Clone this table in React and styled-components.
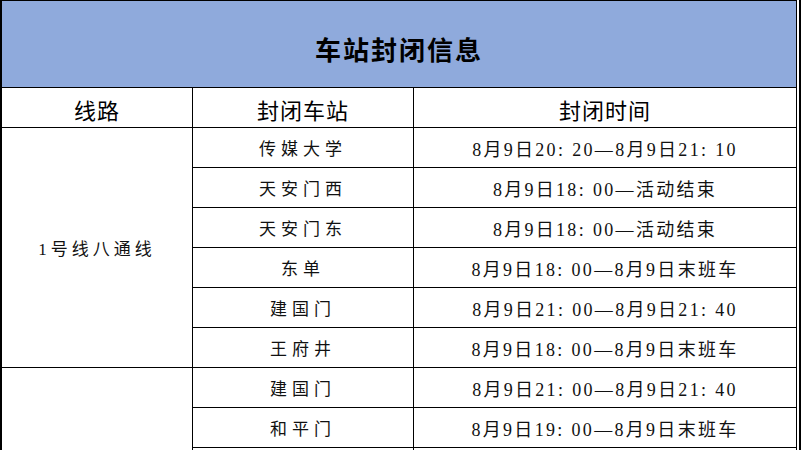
import React from "react";
import styled, { createGlobalStyle } from "styled-components";

const GlobalStyle = createGlobalStyle`
	html, body {
		margin: 0;
		padding: 0;
		background: #fff;
		overflow: hidden;
	}
`;

const Frame = styled.div`
	display: flex;
	width: 801px;
	height: 450px;
	overflow: hidden;
	background: #fff;
`;

const Sheet = styled.div`
	display: grid;
	grid-template-columns: 190px 220px 382px;
	grid-template-rows: 86px;
	grid-auto-rows: 39px;
	gap: 1px;
	padding: 1px 1px 1px 2px;
	background: #000;
	align-self: flex-start;
`;

const RightEdge = styled.div`
	width: 2px;
	margin-left: 2px;
	background: #000;
`;

const TitleCell = styled.div`
	grid-column: 1 / -1;
	background: #8faadc;
	display: flex;
	align-items: center;
	justify-content: center;
	padding-top: 8px;
	box-sizing: border-box;
	font-family: "Noto Sans CJK SC", sans-serif;
	font-weight: 700;
	font-size: 26px;
	letter-spacing: 2px;
	color: #000;
`;

const HeadCell = styled.div`
	background: #fff;
	display: flex;
	align-items: center;
	justify-content: center;
	padding-top: 2px;
	box-sizing: border-box;
	font-family: "Noto Sans CJK SC", sans-serif;
	font-size: 22px;
	letter-spacing: 1px;
	color: #000;
`;

const Cell = styled.div`
	background: #fff;
	display: flex;
	align-items: center;
	justify-content: center;
	font-family: "Liberation Serif", "Noto Sans CJK SC", serif;
	font-size: ${({ $size }) => $size || 17}px;
	color: #111;
	letter-spacing: ${({ $spacing }) => $spacing}px;
	grid-row: ${({ $span }) => ($span ? `span ${$span}` : "auto")};
	grid-column: ${({ $col }) => $col};
`;

const Label = styled.span`
	white-space: nowrap;
`;

const Colon = styled.span`
	padding-right: 7px;
`;

// colons in the times sit tight to the hour with a gap after them
const TimeText = ({ text }) => (
	<Label>
		{text.split(":").map((part, i, arr) => (
			<React.Fragment key={i}>
				{part}
				{i < arr.length - 1 && <Colon>:</Colon>}
			</React.Fragment>
		))}
	</Label>
);

const groups = [
	{
		line: "1号线八通线",
		rows: [
			["传媒大学", "8月9日20:20—8月9日21:10"],
			["天安门西", "8月9日18:00—活动结束"],
			["天安门东", "8月9日18:00—活动结束"],
			["东单", "8月9日18:00—8月9日末班车"],
			["建国门", "8月9日21:00—8月9日21:40"],
			["王府井", "8月9日18:00—8月9日末班车"],
		],
	},
	{
		line: "",
		rows: [
			["建国门", "8月9日21:00—8月9日21:40"],
			["和平门", "8月9日19:00—8月9日末班车"],
			["", ""],
		],
	},
];

const App = () => {
	return (
		<>
			<GlobalStyle />
			<Frame>
				<Sheet>
					<TitleCell>车站封闭信息</TitleCell>
					<HeadCell>线路</HeadCell>
					<HeadCell>封闭车站</HeadCell>
					<HeadCell>封闭时间</HeadCell>
					{groups.map((g, gi) => (
						<React.Fragment key={gi}>
							<Cell $col={1} $span={g.rows.length} $spacing={4}>
								<Label>{g.line}</Label>
							</Cell>
							{g.rows.map(([station, time], ri) => (
								<React.Fragment key={ri}>
									<Cell $col={2} $spacing={5}>
										<Label>{station}</Label>
									</Cell>
									<Cell $col={3} $size={18} $spacing={2.3}>
										<TimeText text={time} />
									</Cell>
								</React.Fragment>
							))}
						</React.Fragment>
					))}
				</Sheet>
				<RightEdge />
			</Frame>
		</>
	);
};

export default App;
